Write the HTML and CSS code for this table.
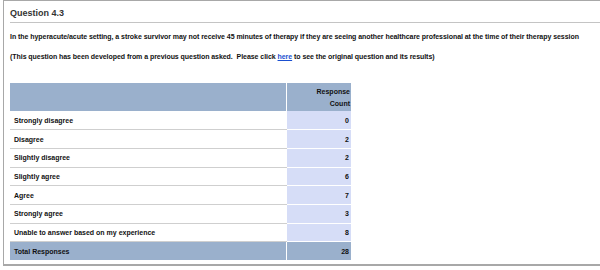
FILE: index.html
```html
<!DOCTYPE html>
<html lang="en">
<head>
    <meta charset="UTF-8">
    <title>Question 4.3</title>
    <link rel="stylesheet" href="styles.css">
</head>
<body>
    <div class="question-box">
        <h2 class="question-title">Question 4.3</h2>
        <p class="question-text">In the hyperacute/acute setting, a stroke survivor may not receive 45 minutes of therapy if they are seeing another healthcare professional at the time of their therapy session</p>
        <p class="question-note">(This question has been developed from a previous question asked.&nbsp; Please click <a href="#">here</a> to see the original question and its results)</p>

        <table class="results">
            <thead>
                <tr>
                    <th class="label-col"></th>
                    <th class="count-col">Response<br>Count</th>
                </tr>
            </thead>
            <tbody>
                <tr><td>Strongly disagree</td><td class="count">0</td></tr>
                <tr><td>Disagree</td><td class="count">2</td></tr>
                <tr><td>Slightly disagree</td><td class="count">2</td></tr>
                <tr><td>Slightly agree</td><td class="count">6</td></tr>
                <tr><td>Agree</td><td class="count">7</td></tr>
                <tr><td>Strongly agree</td><td class="count">3</td></tr>
                <tr><td>Unable to answer based on my experience</td><td class="count">8</td></tr>
            </tbody>
            <tfoot>
                <tr><td>Total Responses</td><td class="count">28</td></tr>
            </tfoot>
        </table>
    </div>
</body>
</html>
```

FILE: styles.css
```css
* {
    margin: 0;
    padding: 0;
    box-sizing: border-box;
}

body {
    font-family: "Liberation Sans", Arial, sans-serif;
    font-weight: bold;
    color: #111;
    background: #fff;
    padding: 0 0 0 3px;
}

.question-box {
    height: 266px;
    border: 1px solid #a8a8a8;
    border-right: none;
    border-bottom-width: 2px;
    padding: 7px 0 0 6px;
}

.question-title {
    font-size: 9px;
    color: #333;
    padding-bottom: 4px;
    border-bottom: 1px solid #c4c4c4;
}

.question-text {
    font-size: 7px;
    letter-spacing: -0.05px;
    margin-top: 10px;
}

.question-note {
    font-size: 7px;
    letter-spacing: -0.05px;
    margin-top: 13px;
}

.question-note a {
    color: #1a4fd0;
}

.results {
    margin-top: 23px;
    border-collapse: collapse;
    font-size: 7px;
}

.results th {
    background: #9ab0cc;
    height: 28px;
    text-align: right;
    vertical-align: middle;
    line-height: 12px;
    padding: 1px 1px 0 0;
}

.results th.label-col {
    width: 276px;
    border-right: 1px solid #fff;
}

.results th.count-col {
    width: 65px;
}

.results td {
    height: 18.7px;
    padding: 0 2px 0 4px;
    border-bottom: 1px solid #cfcfcf;
}

.results td:first-child {
    border-right: 1px solid #fff;
}

.results td.count {
    background: #d6ddf7;
    text-align: right;
    border-bottom: 1px solid #fff;
}

.results tfoot td,
.results tfoot td.count {
    background: #9ab0cc;
    height: 18px;
    border-bottom: none;
}
```
